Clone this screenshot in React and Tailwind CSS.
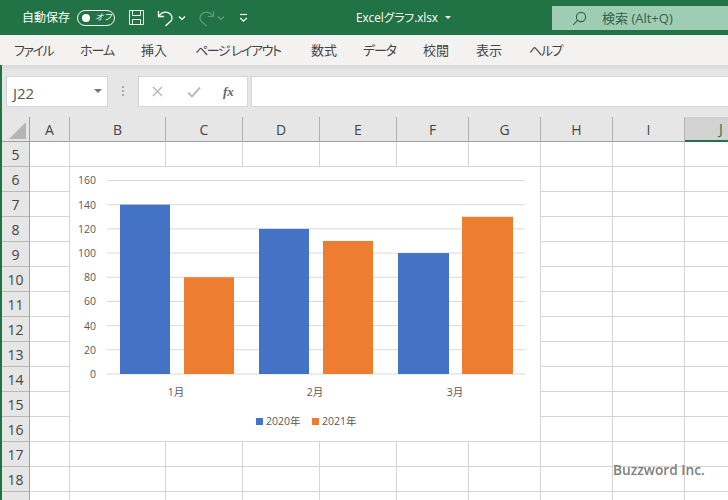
const FONT = "font-['Open_Sans','Noto_Sans_CJK_JP',sans-serif]";

const tabs = [
  ['ファイル', 'w-[38px]', 'mr-[28px]', 'tracking-[-1.5px]'],
  ['ホーム', 'w-[34px]', 'mr-[27px]', 'tracking-[-1px]'],
  ['挿入', 'w-[25px]', 'mr-[29px]', ''],
  ['ページ レイアウト', 'w-[87px]', 'mr-[29px]', 'tracking-[-1.45px]'],
  ['数式', 'w-[26px]', 'mr-[26px]', ''],
  ['データ', 'w-[33px]', 'mr-[27px]', 'tracking-[-1.2px]'],
  ['校閲', 'w-[26px]', 'mr-[27px]', ''],
  ['表示', 'w-[26px]', 'mr-[27px]', ''],
  ['ヘルプ', 'w-[32px]', '', 'tracking-[-1.4px]'],
];
const cols = ['A', 'B', 'C', 'D', 'E', 'F', 'G', 'H', 'I', 'J'];
const rows = [5, 6, 7, 8, 9, 10, 11, 12, 13, 14, 15, 16, 17, 18, 19];
const GRID = 'grid grid-cols-[28px_40px_96px_77px_77px_77px_72px_72px_72px_72px_72px] w-[755px]';

function TitleBar() {
  return (
    <div className="h-[35px] bg-[#217346] flex items-center text-white shrink-0 relative">
      <span className="ml-[22px] w-[55px] text-[12px] leading-none whitespace-nowrap">自動保存</span>
      <div className="w-[38px] h-[16px] rounded-full border border-white flex items-center pl-[4px]">
        <span className="w-[8px] h-[8px] rounded-full bg-white" />
        <span className="ml-[5px] text-[8.5px] leading-none italic whitespace-nowrap">オフ</span>
      </div>
      <svg className="ml-[13px]" width="17" height="17" viewBox="0 0 17 17" fill="none" stroke="#e8f1ec" strokeWidth="1">
        <path d="M1.5 1.5h14v14h-14z" />
        <path d="M4.5 1.5v5h8v-5M4.5 15.5v-5h8v5" />
      </svg>
      <svg className="ml-[12px]" width="18" height="18" viewBox="0 0 18 18" fill="none" stroke="#ffffff" strokeWidth="1.3">
        <path d="M1.5 2v5.5h5.5" />
        <path d="M1.8 7.3C4 4.2 7.5 2.5 11 3.6c3.6 1.2 5 5 3.4 8L8.5 17" />
      </svg>
      <svg className="ml-[3px]" width="8" height="6" viewBox="0 0 8 6" fill="none" stroke="#ffffff" strokeWidth="1.2">
        <path d="M1 1.5l3 3 3-3" />
      </svg>
      <svg className="ml-[11px]" width="18" height="18" viewBox="0 0 18 18" fill="none" stroke="#5f9c7e" strokeWidth="1.2">
        <path d="M16.5 2v5.5H11" />
        <path d="M16.2 7.3C14 4.2 10.5 2.5 7 3.6c-3.6 1.2-5 5-3.4 8L9.5 17" />
      </svg>
      <svg className="ml-[2px]" width="8" height="6" viewBox="0 0 8 6" fill="none" stroke="#5f9c7e" strokeWidth="1.2">
        <path d="M1 1.5l3 3 3-3" />
      </svg>
      <svg className="ml-[14px]" width="9" height="10" viewBox="0 0 9 10" fill="none" stroke="#ffffff" strokeWidth="1.2">
        <path d="M1 1.5h7" />
        <path d="M1.2 5l3.3 3.2L7.8 5" />
      </svg>
      <span className="ml-[108px] w-[83px] text-[11.7px] leading-none whitespace-nowrap [font-feature-settings:'palt']">Excelグラフ.xlsx</span>
      <span className="ml-[6px] w-0 h-0 border-x-[3px] border-x-transparent border-t-[3px] border-t-white" />
      <div className="ml-auto w-[176px] h-[24px] self-start mt-[6px] bg-[#9fcdb3] flex items-center pl-[20px] text-[#33604a]">
        <svg width="15" height="15" viewBox="0 0 15 15" fill="none" stroke="#2f5f48" strokeWidth="1.1">
          <circle cx="9" cy="6" r="4.6" />
          <path d="M5.6 9.2L1.2 14" />
        </svg>
        <span className="ml-[15px] text-[13px] leading-none whitespace-nowrap">検索 (Alt+Q)</span>
      </div>
    </div>
  );
}

function Ribbon() {
  return (
    <div className="h-[30px] bg-[#f3f2f1] flex items-center pl-[14px] shrink-0 text-[13px] leading-none text-[#444444] [font-feature-settings:'palt']">
      {tabs.map(([t, w, m, s]) => (
        <span key={t} className={`${w} ${m} ${s} whitespace-nowrap`}>{t}</span>
      ))}
    </div>
  );
}

function FormulaBar() {
  return (
    <div className="h-[52px] bg-gradient-to-b from-[#d9d8d7] from-0% to-[#e6e6e6] to-[12%] flex pl-[4px] pt-[11px] shrink-0">
      <div className="w-[102px] h-[31px] bg-white border border-[#d4d4d4] flex items-center justify-between pl-[6px] pr-[5px] text-[15px] text-[#555555]">
        <span className="pt-[3px]">J22</span>
        <span className="w-0 h-0 border-x-[4px] border-x-transparent border-t-[4px] border-t-[#777777] -mt-[1px]" />
      </div>
      <div className="w-[30px] h-[30px] flex flex-col items-center justify-center gap-[2px]">
        <span className="w-[2px] h-[2px] bg-[#a8a8a8]" />
        <span className="w-[2px] h-[2px] bg-[#a8a8a8]" />
        <span className="w-[2px] h-[2px] bg-[#a8a8a8]" />
      </div>
      <div className="w-[110px] h-[31px] bg-white border border-[#d4d4d4] flex items-center pl-[13px]">
        <svg width="11" height="11" viewBox="0 0 11 11" fill="none" stroke="#bdbdbd" strokeWidth="1.6">
          <path d="M1 1l9 9M10 1l-9 9" />
        </svg>
        <svg className="ml-[24px]" width="14" height="12" viewBox="0 0 14 12" fill="none" stroke="#bdbdbd" strokeWidth="2">
          <path d="M1 6.5l4 4 8-9" />
        </svg>
        <span className="ml-[22px] text-[13px] leading-none italic font-bold font-['Liberation_Serif',serif] text-[#666666]">fx</span>
      </div>
      <div className="ml-[3px] flex-1 h-[31px] bg-white border-y border-l border-[#d4d4d4]" />
    </div>
  );
}

function Sheet() {
  return (
    <div className="flex-1 overflow-hidden relative">
      <div className={`${GRID} h-[25px] bg-[#e6e6e6] border-b border-[#a0a0a0]`}>
        <div className="border-r border-[#a0a0a0] flex items-end justify-end pr-[3px] pb-[3px]">
          <span className="w-0 h-0 border-l-[17px] border-l-transparent border-b-[17px] border-b-[#b4b4b4]" />
        </div>
        {cols.map((c) => (
          <div
            key={c}
            className={
              c === 'J'
                ? 'bg-[#d2d2d2] border-b-2 border-[#217346] h-[25px] flex items-center justify-center text-[14px] text-[#217346]'
                : 'border-r border-[#b0b0b0] flex items-center justify-center text-[14px] text-[#444444]'
            }
          >
            {c}
          </div>
        ))}
      </div>
      {rows.map((r) => (
        <div key={r} className={`${GRID} h-[25px] bg-white`}>
          <div className="bg-[#e6e6e6] border-r border-[#a0a0a0] border-b border-b-[#b8b8b8] flex items-center justify-center text-[14px] text-[#444444]">
            {r}
          </div>
          {cols.map((c) => (
            <div key={c} className="border-r border-b border-[#d4d4d4]" />
          ))}
        </div>
      ))}
      <Chart />
      <span className="absolute left-[611px] top-[346px] text-[13.7px] font-semibold leading-none text-[#7f7f7f] whitespace-nowrap">
        Buzzword Inc.
      </span>
    </div>
  );
}

function Chart() {
  const ticks = [0, 20, 40, 60, 80, 100, 120, 140, 160];
  const y = (v) => 207 - v * 1.2094;
  const bars = [
    [50, 140, '#4472c4', 50],
    [114, 80, '#ed7d31', 50],
    [189, 120, '#4472c4', 50],
    [253, 110, '#ed7d31', 50],
    [328, 100, '#4472c4', 51],
    [392, 130, '#ed7d31', 51],
  ];
  const label = 'fill-[#595959] text-[10.5px]';
  return (
    <div className="absolute left-[68px] top-[50px] w-[470px] h-[274px] bg-white">
      <svg width="470" height="274" viewBox="0 0 470 274" className={FONT}>
        {ticks.map((t) => (
          <g key={t}>
            <line x1="37" x2="455" y1={y(t)} y2={y(t)} stroke="#d9d9d9" strokeWidth="1" />
            <text x="26" y={y(t) + 4} textAnchor="end" className={label}>{t}</text>
          </g>
        ))}
        {bars.map(([x, v, c, w]) => (
          <rect key={x} x={x} y={y(v)} width={w} height={v * 1.2094} fill={c} />
        ))}
        <text x="106" y="229" textAnchor="middle" className={label}>1月</text>
        <text x="245" y="229" textAnchor="middle" className={label}>2月</text>
        <text x="385" y="229" textAnchor="middle" className={label}>3月</text>
        <rect x="186" y="251" width="7" height="7" fill="#4472c4" />
        <text x="196" y="258" className={label}>2020年</text>
        <rect x="242" y="251" width="7" height="7" fill="#ed7d31" />
        <text x="252" y="258" className={label}>2021年</text>
      </svg>
    </div>
  );
}

export default function App() {
  return (
    <div className={`w-[728px] h-[500px] overflow-hidden flex flex-col bg-white ${FONT}`}>
      <TitleBar />
      <Ribbon />
      <div className="flex-1 min-h-0 flex flex-col border-l-2 border-[#217346]">
        <FormulaBar />
        <Sheet />
      </div>
    </div>
  );
}
